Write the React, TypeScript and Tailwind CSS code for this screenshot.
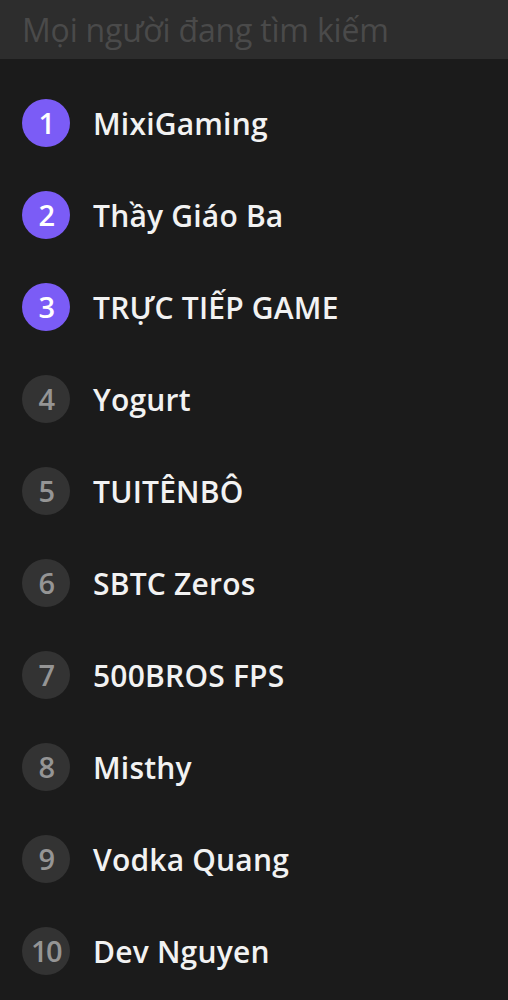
import React from "react";

const items = [
  "MixiGaming",
  "Thầy Giáo Ba",
  "TRỰC TIẾP GAME",
  "Yogurt",
  "TUITÊNBÔ",
  "SBTC Zeros",
  "500BROS FPS",
  "Misthy",
  "Vodka Quang",
  "Dev Nguyen",
];

export default function App() {
  return (
    <div
      className="w-[508px] h-[1000px] bg-[#1b1b1b] overflow-hidden"
      style={{ fontFamily: '"Open Sans", "Noto Sans", sans-serif' }}
    >
      <div className="h-[59px] bg-[#2d2d2d] flex items-center pl-[22px]">
        <span className="text-[32px] leading-none text-[#4a4a4a] tracking-[-0.2px]">Mọi người đang tìm kiếm</span>
      </div>
      <ul className="pt-[18px]">
        {items.map((name, i) => (
          <li key={i} className="h-[92px] flex items-center pl-[22px]">
            <div
              className={
                "w-[48px] h-[48px] rounded-full flex items-center justify-center text-[29px] font-semibold tracking-[-1.5px] " +
                (i < 3 ? "bg-[#7b5cf6] text-white" : "bg-[#333333] text-[#959595]")
              }
            >
              {i + 1}
            </div>
            <span className="ml-[23px] text-[30px] font-semibold text-[#f2f2f2] tracking-[0.2px]">{name}</span>
          </li>
        ))}
      </ul>
    </div>
  );
}
